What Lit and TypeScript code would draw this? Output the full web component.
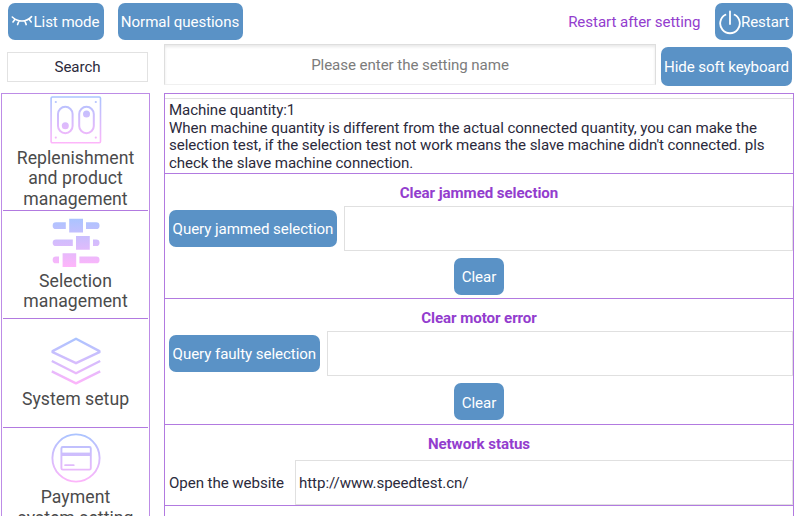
import { LitElement, html, css, svg } from "lit";
import { customElement, property } from "lit/decorators.js";

const gradient = (id: string, y2: number) => svg`
  <defs>
    <linearGradient id=${id} gradientUnits="userSpaceOnUse" x1="0" y1="0" x2="0" y2=${y2}>
      <stop offset="0" stop-color="#a9c4ff" />
      <stop offset="1" stop-color="#ffb5fa" />
    </linearGradient>
  </defs>`;

const trayIcon = html`<svg width="52" height="48" viewBox="0 0 52 48" fill="none">
  ${gradient("tray", 48)}
  <g stroke="url(#tray)" stroke-width="1.6">
    <rect x="1.1" y="1" width="49.4" height="45.7" rx="1.2" />
    <rect x="8" y="10.8" width="14.6" height="26.4" rx="7.3" stroke-width="2" />
    <rect x="29.2" y="10.8" width="14.6" height="26.4" rx="7.3" stroke-width="2" />
  </g>
  <g fill="url(#tray)">
    <circle cx="15.3" cy="29.8" r="3.5" /><circle cx="36.5" cy="18" r="3.5" />
    <circle cx="5.8" cy="6" r="1.1" /><circle cx="45.8" cy="6" r="1.1" />
    <circle cx="5.8" cy="41.6" r="1.1" /><circle cx="45.8" cy="41.6" r="1.1" />
  </g>
</svg>`;

const slidersIcon = html`<svg width="48" height="49" viewBox="0 0 48 49">
  ${gradient("sliders", 49)}
  <g fill="url(#sliders)">
    <path d="M4 4.3H13.8V11H4A3.35 3.35 0 0 1 4 4.3ZM17.2 .8H31V14.6H17.2ZM34 4.3H44.2A3.35 3.35 0 0 1 44.2 11H34Z" />
    <path d="M4 21.4H20.8V28.1H4A3.35 3.35 0 0 1 4 21.4ZM24 18H37.8V31.8H24ZM41 21.4H44.2A3.35 3.35 0 0 1 44.2 28.1H41Z" />
    <path d="M4 38.6H7V45.3H4A3.35 3.35 0 0 1 4 38.6ZM10.6 35.2H24.2V49H10.6ZM27.4 38.6H44.2A3.35 3.35 0 0 1 44.2 45.3H27.4Z" />
  </g>
</svg>`;

const layersIcon = html`<svg width="50" height="48" viewBox="0 0 50 48">
  ${gradient("layers", 48)}
  <g fill="none" stroke="url(#layers)" stroke-width="2.4" stroke-linejoin="round">
    <path d="M25 1.8L48.4 14.1V15.2L25 26.2L1.6 15.2V14.1Z" />
    <path d="M.8 24L25 36.2L49.2 24M.8 34.4L25 46.4L49.2 34.4" />
  </g>
</svg>`;

const cardIcon = html`<svg width="50" height="50" viewBox="0 0 50 50">
  ${gradient("card", 50)}
  <g fill="none" stroke="url(#card)" stroke-width="1.9">
    <circle cx="25" cy="25" r="23.6" />
    <rect x="10.4" y="14" width="29.4" height="22.6" rx="1.4" />
  </g>
  <g fill="url(#card)">
    <rect x="10.4" y="19.6" width="29.4" height="3.4" />
    <rect x="13.2" y="31.2" width="10.4" height="1.9" rx=".9" />
  </g>
</svg>`;

const lashIcon = html`<svg class="lash" width="22" height="12" viewBox="0 0 22 12">
  <path d="M1.3 2Q5.5 6 11 6T20.6 1.6M4 4.2L2 7M8 5.7L6.6 9.6M13.8 5.8L15.2 9.6M18 4L20.2 7"
    fill="none" stroke="#fff" stroke-width="1.6" stroke-linecap="round" />
</svg>`;

const powerIcon = html`<svg width="22" height="25" viewBox="0 0 22 25">
  <path d="M6.4 4.8A9.8 9.8 0 1 0 15.6 4.8M11 1.4V14"
    fill="none" stroke="#fff" stroke-width="1.8" stroke-linecap="round" />
</svg>`;

@customElement("clear-section")
class ClearSection extends LitElement {
  @property() heading = "";
  @property() query = "";

  static styles = css`
    :host { display: block; box-sizing: border-box; border-bottom: 1px solid #b27ae0; height: 125.4px; padding-top: 10px; }
    .title { text-align: center; font-weight: 700; color: #933dce; line-height: 18px; }
    .row { display: flex; gap: 7px; padding-left: 4px; margin-top: 4px; height: 45px; }
    .btn { box-sizing: border-box; height: 37px; margin-top: 4px; border-radius: 7px; background: #5a92c6; color: #fff;
      padding: 2px 3.6px 0; display: flex; align-items: center; white-space: nowrap; }
    .field { flex: 1; border: 1px solid #e0e0e0; }
    .clear { width: 50px; justify-content: center; margin: 7px auto 0; padding-top: 3px; }
  `;

  render() {
    return html`<div class="title">${this.heading}</div>
      <div class="row"><div class="btn">${this.query}</div><div class="field"></div></div>
      <div class="btn clear">Clear</div>`;
  }
}

@customElement("app-root")
class AppRoot extends LitElement {
  static styles = css`
    :host { display: block; box-sizing: border-box; width: 800px; height: 516px; overflow: hidden; background: #fff;
      font: 15.1px/17.7px Roboto, "Liberation Sans", sans-serif; color: #2b2a3c; letter-spacing: -0.07px; }
    .top { display: flex; align-items: center; height: 37px; padding: 3px 7px 0 7.5px; }
    .btn { box-sizing: border-box; height: 37px; border-radius: 7px; background: #5a92c6; color: #fff; padding-top: 2px;
      display: flex; align-items: center; justify-content: center; white-space: nowrap; flex: none; }
    .mode { width: 96px; margin-right: 14px; }
    .normal { width: 125px; }
    .note { margin-left: auto; margin-right: 14.5px; color: #933dce; padding-top: 2px; }
    .restart { width: 78px; }
    .lash { margin-top: -4px; }
    .restart svg { margin-top: -1px; }
    .second { display: flex; height: 53px; }
    .search { box-sizing: border-box; width: 141px; height: 30px; margin: 12px 17px 0 7px; border: 1px solid #e2e2e2;
      display: flex; align-items: center; justify-content: center; padding-top: 2px; }
    .name { box-sizing: border-box; width: 492px; height: 41px; margin: 4px 5px 0 -1px; border: 1px solid #dedede;
      border-bottom-color: #f0f0f0; box-shadow: inset 0 2px 3px #e9e9e9; color: #7c7c7c; padding-top: 3px;
      display: flex; align-items: center; justify-content: center; }
    .hide { width: 131px; height: 39px; margin-top: 7px; }
    .content { display: flex; gap: 14px; padding-left: 1px; }
    .side { box-sizing: border-box; width: 149px; height: 423px; overflow: hidden; border: 1.6px solid #bd8ce6; border-bottom: 0;
      font-size: 17.65px; line-height: 20.7px; letter-spacing: 0.04px; color: #4b4b4b; text-align: center; }
    .item { box-sizing: border-box; height: 108.5px; margin: 0 1px; border-bottom: 1px solid #b27ae0; display: flex;
      flex-direction: column; align-items: center; justify-content: center; gap: 4px; padding-top: 1px; }
    .item svg { display: block; flex: none; }
    .first { height: 116.5px; padding-top: 2px; }
    .last { height: 130px; justify-content: flex-start; padding-top: 5.5px; }
    .main { box-sizing: border-box; width: 630px; height: 423px; overflow: hidden; border: 1px solid #b27ae0; border-bottom: 0; }
    .info { box-sizing: border-box; height: 80px; border-bottom: 1px solid #b27ae0; padding-top: 4px; }
    .text { border-top: 1px solid #e0e0e0; padding: 3px 0 0 4px; white-space: nowrap; letter-spacing: -0.08px; }
    .net { box-sizing: border-box; height: 81px; padding-top: 10px; border-bottom: 1px solid #b27ae0; }
    .title { text-align: center; font-weight: 700; color: #933dce; line-height: 18px; }
    .row { display: flex; align-items: center; height: 45px; margin-top: 7px; padding-left: 4px; }
    .label { width: 126px; padding-top: 3px; }
    .url { box-sizing: border-box; flex: 1; height: 45px; border: 1px solid #e0e0e0; padding: 3px 0 0 3px; display: flex; align-items: center; }
  `;

  render() {
    return html`
      <div class="top">
        <div class="btn mode">${lashIcon}List mode</div>
        <div class="btn normal">Normal questions</div>
        <div class="note">Restart after setting</div>
        <div class="btn restart">${powerIcon}Restart</div>
      </div>
      <div class="second">
        <div class="search">Search</div>
        <div class="name">Please enter the setting name</div>
        <div class="btn hide">Hide soft keyboard</div>
      </div>
      <div class="content">
        <div class="side">
          <div class="item first">${trayIcon}<div>Replenishment<br />and product<br />management</div></div>
          <div class="item">${slidersIcon}<div>Selection<br />management</div></div>
          <div class="item">${layersIcon}<div>System setup</div></div>
          <div class="item last">${cardIcon}<div>Payment<br />system setting</div></div>
        </div>
        <div class="main">
          <div class="info"><div class="text">
            Machine quantity:1<br />
            When machine quantity is different from the actual connected quantity, you can make the<br />
            selection test, if the selection test not work means the slave machine didn't connected. pls<br />
            check the slave machine connection.
          </div></div>
          <clear-section heading="Clear jammed selection" query="Query jammed selection"></clear-section>
          <clear-section heading="Clear motor error" query="Query faulty selection"></clear-section>
          <div class="net">
            <div class="title">Network status</div>
            <div class="row"><div class="label">Open the website</div><div class="url">http://www.speedtest.cn/</div></div>
          </div>
        </div>
      </div>`;
  }
}
